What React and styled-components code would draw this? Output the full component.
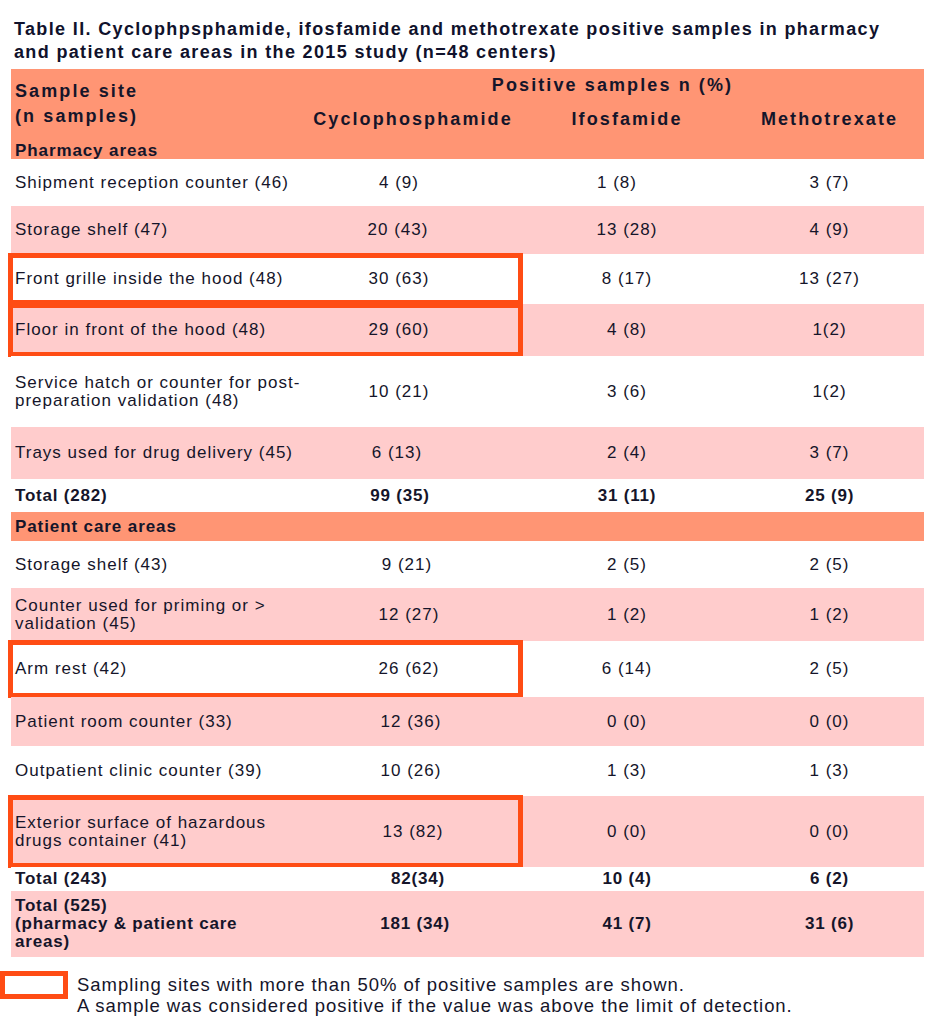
import React from 'react';
import styled, { createGlobalStyle } from 'styled-components';

const Global = createGlobalStyle`
  * { box-sizing: border-box; }
  html, body { margin: 0; padding: 0; background: #ffffff; }
  body { font-family: "Liberation Sans", Arial, sans-serif; color: #15152a; }
`;

const COLS = '290px 224px 204px 195px';
const tones = { white: '#ffffff', pink: '#ffcccc', salmon: '#ff9574' };
const RED = '#ff4c14';

const Page = styled.div`
  width: 940px;
  padding-top: 18px;
`;

const Title = styled.h1`
  margin: 0 0 5px 14px;
  font-size: 18px;
  line-height: 23px;
  font-weight: 700;
  letter-spacing: 1.35px;
  color: #10122c;
`;

const Table = styled.div`
  margin-left: 11px;
  width: 913px;
  display: flex;
  flex-direction: column;
`;

const Header = styled.div`
  display: grid;
  grid-template-columns: 290px 623px;
  grid-template-rows: 66px 24px;
  background: ${tones.salmon};
  font-weight: 700;
  font-size: 18px;
  letter-spacing: 2.1px;
`;

const SiteHead = styled.div`
  grid-column: 1;
  grid-row: 1;
  padding: 10px 0 0 4px;
  line-height: 25px;
`;

const ResultsHead = styled.div`
  grid-column: 2;
  grid-row: 1 / span 2;
  padding-top: 4px;
  display: flex;
  flex-direction: column;
`;

const SpanTitle = styled.div`
  text-align: center;
  line-height: 24px;
`;

const DrugRow = styled.div`
  display: grid;
  grid-template-columns: 224px 204px 195px;
  margin-top: 10px;
  line-height: 24px;
`;

const DrugName = styled.div`
  text-align: center;
  padding-left: ${p => p.$pl || 0}px;
`;

const AreaLabel = styled.div`
  grid-column: 1;
  grid-row: 2;
  padding: ${p => p.$pt || 0}px 0 0 4px;
  font-size: 17px;
  letter-spacing: 0.9px;
  line-height: 16px;
  font-weight: 700;
`;

const SectionRow = styled.div`
  height: ${p => p.$h}px;
  background: ${tones.salmon};
  display: flex;
  align-items: center;
  padding-left: 4px;
  font-size: 17px;
  font-weight: 700;
  letter-spacing: 0.9px;
`;

const Row = styled.div`
  position: relative;
  display: grid;
  grid-template-columns: ${COLS};
  align-items: center;
  height: ${p => p.$h}px;
  background: ${p => tones[p.$tone]};
  font-size: 17px;
  letter-spacing: ${p => (p.$bold ? 0.8 : 1)}px;
  font-weight: ${p => (p.$bold ? 700 : 400)};
`;

const Site = styled.div`
  padding-left: 4px;
  line-height: 18px;
  white-space: nowrap;
`;

const Value = styled.div`
  text-align: center;
  white-space: nowrap;
  padding-left: ${p => (p.$shift > 0 ? p.$shift * 2 : 0) + (p.$extra || 0)}px;
  padding-right: ${p => (p.$shift < 0 ? -p.$shift * 2 : 0)}px;
`;

const Highlight = styled.div`
  position: absolute;
  left: -3px;
  top: -1px;
  bottom: -1px;
  width: 515px;
  border: 5px solid ${RED};
  pointer-events: none;
`;

const Legend = styled.div`
  display: flex;
  gap: 9px;
  margin-top: 14px;
`;

const LegendBox = styled.div`
  flex: none;
  width: 68px;
  height: 28px;
  border: 5px solid ${RED};
`;

const LegendText = styled.div`
  margin-top: 3px;
  font-size: 18.5px;
  line-height: 21px;
  letter-spacing: 0.95px;
  color: #15152a;
`;

const pharmacy = [
  { site: ['Shipment reception counter (46)'], v: ['4 (9)', '1 (8)', '3 (7)'], s: [-14, -10, 0], h: 47, tone: 'white' },
  { site: ['Storage shelf (47)'], v: ['20 (43)', '13 (28)', '4 (9)'], s: [-15, 0, 0], h: 48, tone: 'pink' },
  { site: ['Front grille inside the hood (48)'], v: ['30 (63)', '8 (17)', '13 (27)'], s: [-14, 0, 0], h: 50, tone: 'white', hl: true },
  { site: ['Floor in front of the hood (48)'], v: ['29 (60)', '4 (8)', '1(2)'], s: [-14, 0, 0], h: 52, tone: 'pink', hl: true },
  { site: ['Service hatch or counter for post-', 'preparation validation (48)'], v: ['10 (21)', '3 (6)', '1(2)'], s: [-14, 0, 0], h: 71, tone: 'white' },
  { site: ['Trays used for drug delivery (45)'], v: ['6 (13)', '2 (4)', '3 (7)'], s: [-16, 0, 0], h: 52, tone: 'pink' },
  { site: ['Total (282)'], v: ['99 (35)', '31 (11)', '25 (9)'], s: [-13, 0, 0], h: 33, tone: 'white', bold: true },
];

const patient = [
  { site: ['Storage shelf (43)'], v: ['9 (21)', '2 (5)', '2 (5)'], s: [-6, 0, 0], h: 47, tone: 'white' },
  { site: ['Counter used for priming or >', 'validation (45)'], v: ['12 (27)', '1 (2)', '1 (2)'], s: [-4, 0, 0], h: 53, tone: 'pink' },
  { site: ['Arm rest (42)'], v: ['26 (62)', '6 (14)', '2 (5)'], s: [-4, 0, 0], h: 56, tone: 'white', hl: true },
  { site: ['Patient room counter (33)'], v: ['12 (36)', '0 (0)', '0 (0)'], s: [-2, 0, 0], h: 49, tone: 'pink' },
  { site: ['Outpatient clinic counter (39)'], v: ['10 (26)', '1 (3)', '1 (3)'], s: [-2, 0, 0], h: 50, tone: 'white' },
  { site: ['Exterior surface of hazardous', 'drugs container (41)'], v: ['13 (82)', '0 (0)', '0 (0)'], s: [0, 0, 0], h: 71, tone: 'pink', hl: true },
  { site: ['Total (243)'], v: ['82(34)', '10 (4)', '6 (2)'], s: [5, 0, 0], h: 24, tone: 'white', bold: true },
  { site: ['Total (525)', '(pharmacy & patient care', 'areas)'], v: ['181 (34)', '41 (7)', '31 (6)'], s: [2, 0, 0], h: 66, tone: 'pink', bold: true },
];

function DataRow({ r }) {
  return (
    <Row $h={r.h} $tone={r.tone} $bold={r.bold}>
      <Site>
        {r.site.map((line, i) => (
          <div key={i}>{line}</div>
        ))}
      </Site>
      {r.v.map((val, i) => (
        <Value key={i} $shift={r.s[i]} $extra={i === 2 ? 6 : 0}>
          {val}
        </Value>
      ))}
      {r.hl && <Highlight />}
    </Row>
  );
}

export default function App() {
  return (
    <>
      <Global />
      <Page>
        <Title>
          Table II. Cyclophpsphamide, ifosfamide and methotrexate positive samples in pharmacy
          <br />
          and patient care areas in the 2015 study (n=48 centers)
        </Title>
        <Table>
          <Header>
            <SiteHead>
              <div>Sample site</div>
              <div>(n samples)</div>
            </SiteHead>
            <ResultsHead>
              <SpanTitle>Positive samples n (%)</SpanTitle>
              <DrugRow>
                <DrugName>Cyclophosphamide</DrugName>
                <DrugName>Ifosfamide</DrugName>
                <DrugName $pl={6}>Methotrexate</DrugName>
              </DrugRow>
            </ResultsHead>
            <AreaLabel $pt={8}>Pharmacy areas</AreaLabel>
          </Header>
          {pharmacy.map((r, i) => (
            <DataRow key={'p' + i} r={r} />
          ))}
          <SectionRow $h={29}>Patient care areas</SectionRow>
          {patient.map((r, i) => (
            <DataRow key={'c' + i} r={r} />
          ))}
        </Table>
        <Legend>
          <LegendBox />
          <LegendText>
            Sampling sites with more than 50% of positive samples are shown.
            <br />
            A sample was considered positive if the value was above the limit of detection.
          </LegendText>
        </Legend>
      </Page>
    </>
  );
}
